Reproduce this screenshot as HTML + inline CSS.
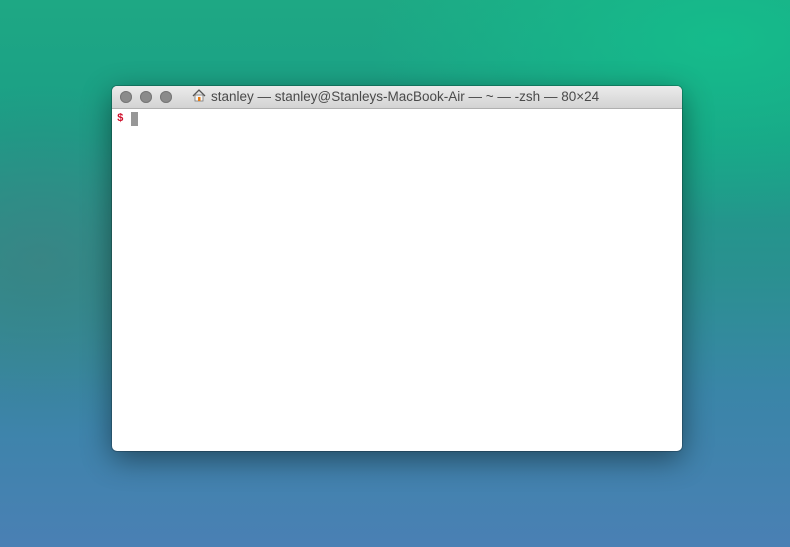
<!DOCTYPE html>
<html><head><style>
html,body{margin:0;padding:0}
body{width:790px;height:547px;overflow:hidden;position:relative;
background:
radial-gradient(ellipse 500px 260px at 720px 40px, rgba(20,190,140,0.9), rgba(20,190,140,0) 70%),
radial-gradient(ellipse 300px 250px at 40px 260px, rgba(60,130,130,0.8), rgba(60,130,130,0) 70%),
linear-gradient(180deg,#1ea884 0%,#1a9e86 25%,#2a9090 50%,#3a85a8 72%,#4a80b4 100%);
font-family:"Liberation Sans",sans-serif}
.win{position:absolute;left:112px;top:86px;width:570px;height:365px;background:#fff;border-radius:5px;box-shadow:0 8px 30px rgba(0,0,0,.45),0 0 0 1px rgba(0,0,0,.2);overflow:hidden}
.tb{height:22px;background:linear-gradient(#ebebeb,#d3d3d3);border-bottom:1px solid #b0b0b0;position:relative}
.dot{position:absolute;top:5px;width:12px;height:12px;border-radius:50%;background:#8b8b8b;box-shadow:inset 0 0 0 1px #777}
.title{position:absolute;left:80px;top:3px;font-size:13.5px;color:#4a4a4a;white-space:nowrap}
.prompt{position:absolute;left:5px;top:27px;font-family:"Liberation Mono",monospace;font-size:11px;font-weight:bold;color:#d0102c}
.cur{position:absolute;left:19px;top:26px;width:7px;height:14px;background:#979797}
</style></head><body>
<div class="win">
<div class="tb">
<div class="dot" style="left:8px"></div><div class="dot" style="left:28px"></div><div class="dot" style="left:48px"></div>
<div class="title"><svg width="14" height="13" viewBox="0 0 14 13" style="vertical-align:-1px;margin-right:5px"><path d="M1 7 L7 1 L13 7" fill="none" stroke="#555" stroke-width="1.3"/><rect x="3" y="6" width="8" height="6" fill="#f4f4f4" stroke="#777" stroke-width="0.8"/><rect x="6" y="8" width="2.5" height="4" fill="#e87a10"/></svg>stanley — stanley@Stanleys-MacBook-Air — ~ — -zsh — 80×24</div>
</div>
<div class="prompt">$</div><div class="cur"></div>
</div>
</body></html>
